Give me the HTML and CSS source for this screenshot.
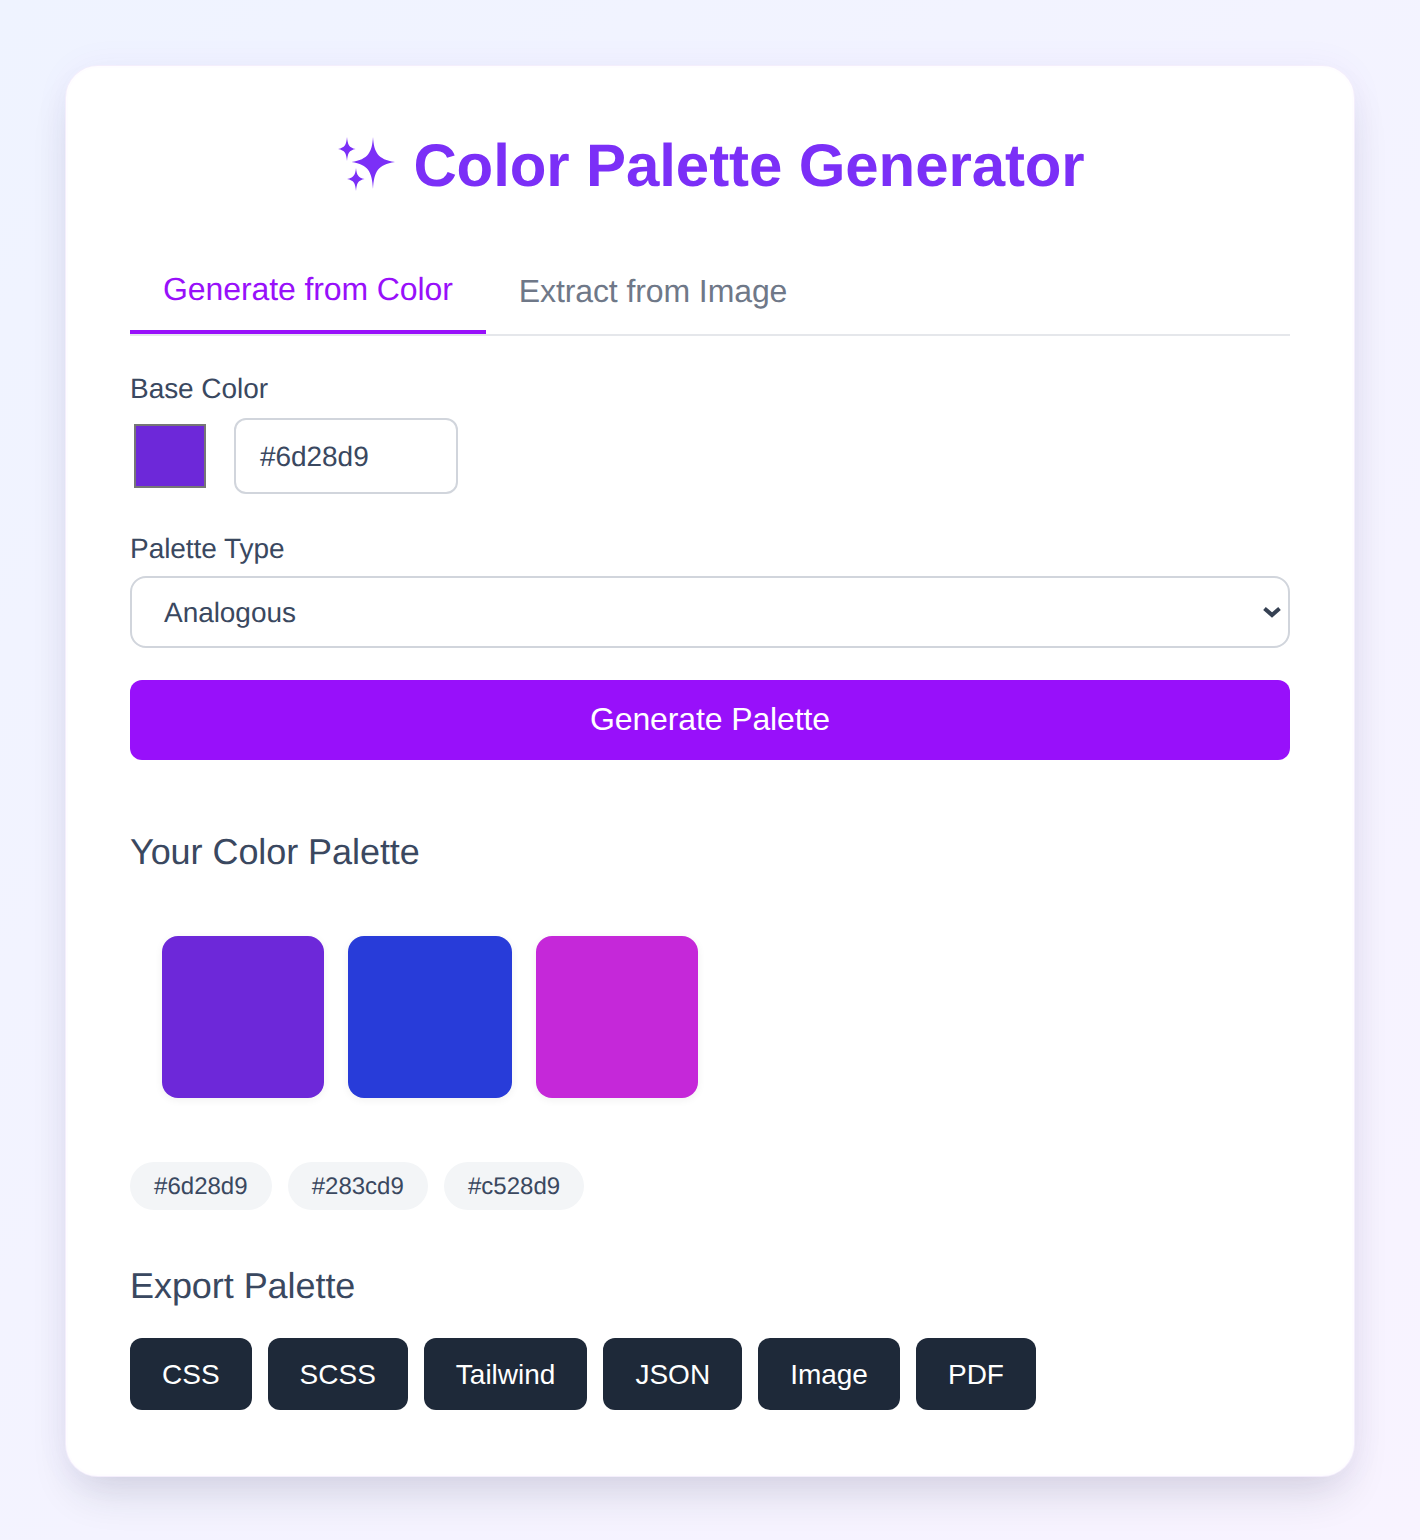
FILE: index.html
```html
<!DOCTYPE html>
<html lang="en">
<head>
<meta charset="utf-8">
<title>Color Palette Generator</title>
<link rel="stylesheet" href="styles.css">
</head>
<body>
<main class="card">
  <h1 class="title">
    <svg class="sparkles" width="60" height="60" viewBox="0 0 60 60" aria-hidden="true"><path d="M12 3C12.800 11 14 13.500 20.500 15C14 16.500 12.800 19 12 27C11.200 19 10 16.500 3 15C10 13.500 11.200 11 12 3Z"/><path d="M38 3C39 18 42.500 25.500 60 28C42.500 30.500 39 38 38 55C37 38 33.500 30.500 16.500 28C33.500 25.500 37 18 38 3Z"/><path d="M21 34C21.800 41 23 43.500 29.500 45C23 46.500 21.800 49 21 57C20.200 49 19 46.500 12 45C19 43.500 20.200 41 21 34Z"/></svg>
    <span class="title-text">Color Palette Generator</span>
  </h1>
  <nav class="tabs">
    <div class="tab tab-active">Generate from Color</div>
    <div class="tab">Extract from Image</div>
  </nav>
  <section class="field">
    <div class="label">Base Color</div>
    <div class="color-row">
      <div class="color-well"></div>
      <div class="hex-input">#6d28d9</div>
    </div>
  </section>
  <section class="field">
    <div class="label label-tight">Palette Type</div>
    <div class="select">
      <span class="select-value">Analogous</span>
      <svg width="20" height="12" viewBox="0 0 20 12" aria-hidden="true"><path d="M2.500 2.500L10 9L17.500 2.500" fill="none" stroke="#364153" stroke-width="4"/></svg>
    </div>
  </section>
  <button class="generate">Generate Palette</button>
  <h2 class="heading heading-palette">Your Color Palette</h2>
  <div class="swatches">
    <div class="swatch swatch-a"></div>
    <div class="swatch swatch-b"></div>
    <div class="swatch swatch-c"></div>
  </div>
  <div class="chips">
    <span class="chip">#6d28d9</span>
    <span class="chip">#283cd9</span>
    <span class="chip">#c528d9</span>
  </div>
  <h2 class="heading heading-export">Export Palette</h2>
  <div class="exports">
    <button class="export">CSS</button>
    <button class="export">SCSS</button>
    <button class="export">Tailwind</button>
    <button class="export">JSON</button>
    <button class="export">Image</button>
    <button class="export">PDF</button>
  </div>
</main>
</body>
</html>
```
FILE: styles.css
```css
* { box-sizing: border-box; }
html, body { margin: 0; padding: 0; }
body {
  width: 1420px;
  height: 1540px;
  padding: 66px 66px 0;
  overflow: hidden;
  background: linear-gradient(135deg, #eff3ff 0%, #f8f3ff 100%);
  font-family: "Liberation Sans", Arial, sans-serif;
  text-rendering: geometricPrecision;
  color: #3a4860;
}
.card {
  width: 1288px;
  height: 1410px;
  padding: 62px 62px 0;
  background: #fff;
  border: 2px solid #fefdff;
  border-radius: 32px;
  box-shadow: 0 0 0 1px #f4eefc, 0 24px 44px -10px rgba(31, 41, 55, 0.16), 0 0 36px rgba(124, 58, 237, 0.05);
}
.title {
  display: flex;
  justify-content: center;
  align-items: center;
  gap: 18px;
  margin: 0 0 58px;
  height: 68px;
  font-size: 60px;
  line-height: 68px;
  font-weight: 700;
  letter-spacing: -0.1px;
  color: #7b2ff7;
}
.title-text { margin-top: 4px; }
.sparkles { fill: #7b2ff7; flex: none; }
.tabs {
  display: flex;
  height: 80px;
  border-bottom: 2px solid #e5e7eb;
  font-size: 32px;
  line-height: 36px;
  letter-spacing: -0.1px;
}
.tab {
  padding: 15px 33px 0;
  margin-top: 2px;
  color: #6f7888;
}
.tab-active {
  margin-top: 0;
  height: 78px;
  color: #9810fa;
  border-bottom: 4px solid #9810fa;
}
.field { margin-top: 36px; }
.field + .field { margin-top: 38px; }
.label {
  font-size: 28px;
  line-height: 34px;
  letter-spacing: -0.05px;
  margin-bottom: 12px;
}
.label-tight { margin-bottom: 10px; }
.color-row { display: flex; align-items: center; gap: 28px; padding-left: 4px; }
.color-well {
  width: 72px;
  height: 64px;
  background: #6d28d9;
  border: 2px solid #767676;
}
.hex-input {
  width: 224px;
  height: 76px;
  padding-left: 24px;
  border: 2px solid #d1d5dc;
  border-radius: 12px;
  font-size: 28px;
  line-height: 74px;
  letter-spacing: -0.05px;
}
.select {
  display: flex;
  justify-content: space-between;
  align-items: center;
  height: 72px;
  padding: 0 6px 0 32px;
  border: 2px solid #d1d5dc;
  border-radius: 16px;
  font-size: 28px;
  letter-spacing: -0.05px;
}
.select-value { margin-top: 2px; }
.generate {
  display: block;
  width: 100%;
  height: 80px;
  margin-top: 32px;
  padding: 0 0 2px;
  border: 0;
  border-radius: 12px;
  background: #9810fa;
  color: #fff;
  font: 32px "Liberation Sans", Arial, sans-serif;
  letter-spacing: -0.12px;
}
.heading {
  margin: 0;
  font-size: 36px;
  line-height: 40px;
  font-weight: 400;
  letter-spacing: -0.06px;
}
.heading-palette { margin-top: 72px; }
.swatches { display: flex; gap: 24px; margin-top: 64px; padding-left: 32px; }
.swatch {
  width: 162px;
  height: 162px;
  border-radius: 16px;
  box-shadow: 0 2px 8px rgba(0, 0, 0, 0.06);
}
.swatch-a { background: #6d28d9; }
.swatch-b { background: #283cd9; width: 164px; }
.swatch-c { background: #c528d9; }
.chips { display: flex; gap: 16px; margin-top: 64px; }
.chip {
  height: 48px;
  padding: 0 24.1px;
  border-radius: 24px;
  background: #f3f5f7;
  font-size: 24px;
  line-height: 50px;
}
.heading-export { margin-top: 56px; }
.exports { display: flex; gap: 16px; margin-top: 32px; }
.export {
  height: 72px;
  padding: 2px 32px 0;
  border: 0;
  border-radius: 12px;
  background: #1e2939;
  color: #fff;
  font: 28px "Liberation Sans", Arial, sans-serif;
}
```
